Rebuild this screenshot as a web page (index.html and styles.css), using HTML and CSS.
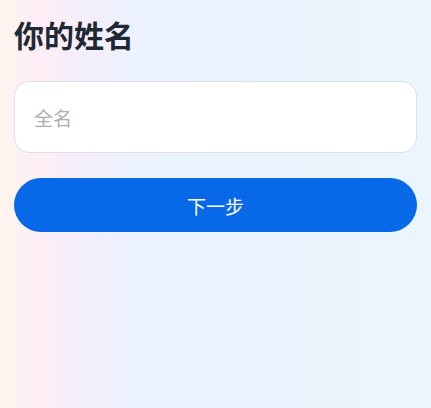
FILE: index.html
```html
<!DOCTYPE html>
<html lang="zh">
<head>
<meta charset="utf-8">
<title>你的姓名</title>
<link rel="stylesheet" href="styles.css">
</head>
<body>
<main class="page">
  <h1 class="title">你的姓名</h1>
  <div class="field">
    <input class="input" type="text" placeholder="全名">
  </div>
  <button class="next" type="button">下一步</button>
</main>
</body>
</html>
```
FILE: styles.css
```css
html, body {
  margin: 0;
  height: 100%;
}
body {
  background: linear-gradient(90deg, #fff4ee 0px, #fdeef6 40px, #f4eefc 85px, #ecf2fe 140px, #eaf4fe 200px, #ebf5fe 431px);
  font-family: "Noto Sans CJK SC", "Noto Sans", sans-serif;
}
.page {
  display: flex;
  flex-direction: column;
  padding: 15px 14px 0 14px;
}
.title {
  margin: 0;
  font-size: 30px;
  line-height: 38px;
  font-weight: 700;
  color: #1e2933;
}
.field {
  margin-top: 28px;
}
.input {
  box-sizing: border-box;
  width: 100%;
  height: 72px;
  border: 1px solid #dcdfe4;
  border-radius: 15px;
  background: #fff;
  padding: 0 19px;
  font-family: "Noto Sans CJK SC", sans-serif;
  font-size: 19px;
  color: #1e2933;
  outline: none;
}
.input::placeholder {
  color: #a9adb3;
}
.next {
  margin-top: 25px;
  height: 54px;
  border: none;
  border-radius: 27px;
  background: #0768e8;
  color: #fff;
  font-family: "Noto Sans CJK SC", sans-serif;
  font-size: 19px;
  padding: 0;
}
```
